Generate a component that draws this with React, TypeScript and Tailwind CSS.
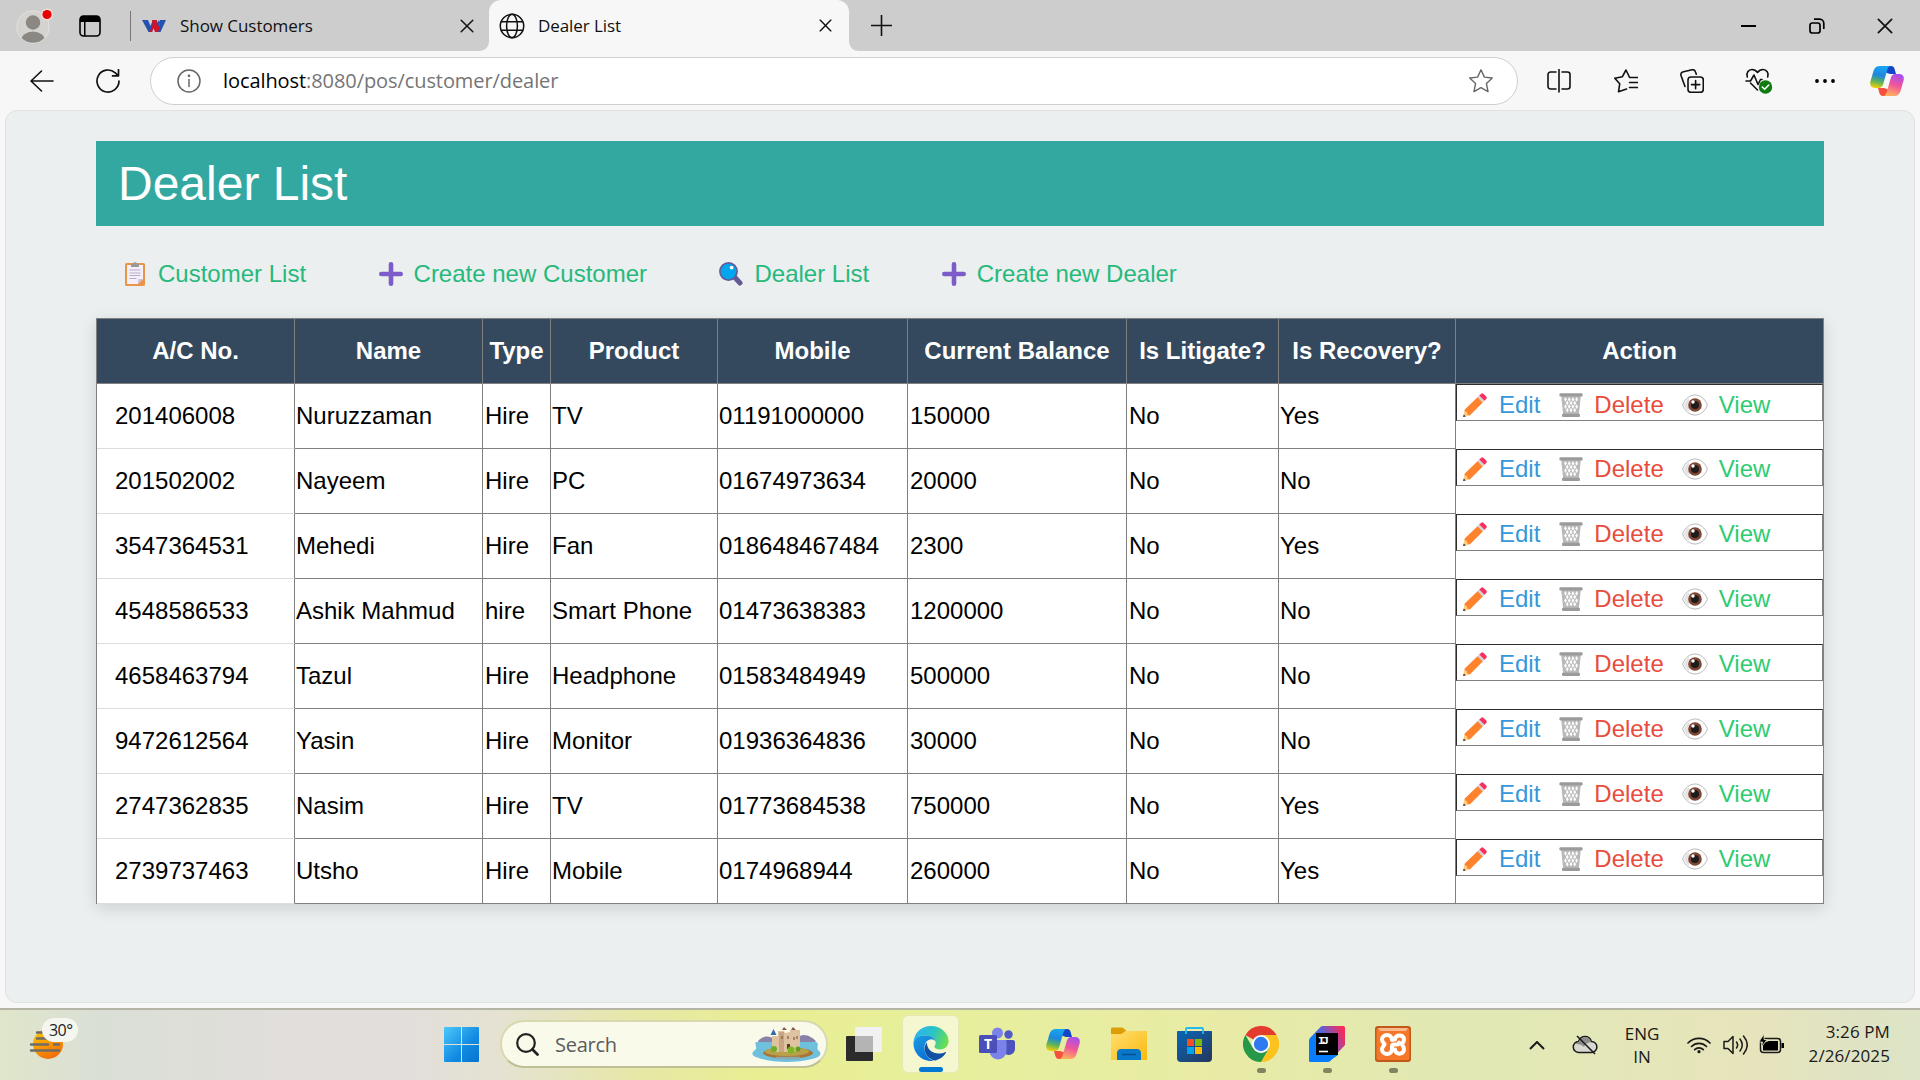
import type { ReactNode } from "react";

const UI = "font-['Open_Sans','Noto_Sans',sans-serif]";

const rows = [
  ["201406008", "Nuruzzaman", "Hire", "TV", "01191000000", "150000", "No", "Yes"],
  ["201502002", "Nayeem", "Hire", "PC", "01674973634", "20000", "No", "No"],
  ["3547364531", "Mehedi", "Hire", "Fan", "018648467484", "2300", "No", "Yes"],
  ["4548586533", "Ashik Mahmud", "hire", "Smart Phone", "01473638383", "1200000", "No", "No"],
  ["4658463794", "Tazul", "Hire", "Headphone", "01583484949", "500000", "No", "No"],
  ["9472612564", "Yasin", "Hire", "Monitor", "01936364836", "30000", "No", "No"],
  ["2747362835", "Nasim", "Hire", "TV", "01773684538", "750000", "No", "Yes"],
  ["2739737463", "Utsho", "Hire", "Mobile", "0174968944", "260000", "No", "Yes"],
];

const headers = ["A/C No.", "Name", "Type", "Product", "Mobile", "Current Balance", "Is Litigate?", "Is Recovery?", "Action"];

const COLS = "grid grid-cols-[198px_188px_68px_167px_190px_219px_152px_177px_368px]";

const cellPadding = ["pl-[18px]", "pl-px", "pl-[2px]", "pl-px", "pl-px", "pl-[2px]", "pl-[2px]", "pl-px"];

/* ---------- page emoji ---------- */

function Clipboard() {
  return (
    <svg width="24" height="24" viewBox="0 0 24 24" className="shrink-0">
      <rect x="2" y="1" width="20" height="23" rx="1.5" fill="#e8954a" />
      <path d="M4 3h16v14l-5 5H4z" fill="#f4effa" />
      <path d="M15 22l5-5v5z" fill="#e8954a" />
      <path d="M15 22v-5h5z" fill="#cfc3de" />
      <path d="M8 2h2c0-2.400 4-2.400 4 0h2v3H8z" fill="#9a9a9a" />
      <path d="M6.500 8h11M6.500 11h11M6.500 13.500h11M6.500 16.500h7" stroke="#b7aec4" strokeWidth="1.200" />
    </svg>
  );
}

function Plus() {
  return (
    <svg width="24" height="24" viewBox="0 0 24 24" className="shrink-0">
      <path d="M12 2.300v19.400M2.300 12h19.400" stroke="#7b5cc9" strokeWidth="4.600" strokeLinecap="round" />
    </svg>
  );
}

function Magnifier() {
  return (
    <svg width="24" height="24" viewBox="0 0 24 24" className="shrink-0">
      <path d="M15.500 15l5.500 6" stroke="#635994" strokeWidth="5" strokeLinecap="round" />
      <circle cx="9.500" cy="9.500" r="8.600" fill="#00a6ed" stroke="#635994" strokeWidth="1.600" />
      <circle cx="12.600" cy="5.600" r="1.900" fill="#fff" />
    </svg>
  );
}

function Pencil() {
  return (
    <svg width="24" height="24" viewBox="0 0 24 24" className="shrink-0">
      <path d="M1.500 17L6.500 22.500 0.300 24z" fill="#ffce7c" />
      <path d="M1.500 16.800L14.800 4l5.200 5.200L6.800 22.400 4.500 21.500 3.600 19 2 18.500z" fill="#ff822d" />
      <path d="M14.500 4.300l1.900-1.900 5.200 5.200-1.900 1.900z" fill="#d3d3d3" />
      <path d="M16.200 2.600L18 .9c.8-.8 1.800-.8 2.600 0l2.600 2.600c.8.8.8 1.800 0 2.500l-1.700 1.700z" fill="#f8305f" />
      <path d="M.8 21.400l2 2L0 24z" fill="#402a32" />
    </svg>
  );
}

function Trash() {
  return (
    <svg width="24" height="24" viewBox="0 0 24 24" className="shrink-0">
      <path d="M2.200 3h19.600l-2 19H4.200z" fill="#b9b9b9" />
      <g fill="#fff">
        <path d="M6.500 4l1.400 2.400-1.400 2.400-1.400-2.400zM10.200 4l1.400 2.400-1.400 2.400-1.400-2.400zM13.900 4l1.400 2.400-1.400 2.400-1.400-2.400zM17.600 4L19 6.400l-1.400 2.400-1.400-2.400z" />
        <path d="M8.300 7.600l1.400 2.400-1.400 2.400L6.900 10zM12 7.600l1.400 2.400-1.400 2.400-1.400-2.400zM15.700 7.600l1.400 2.400-1.400 2.400-1.400-2.400z" />
        <path d="M6.500 11.200l1.400 2.400L6.500 16l-1.400-2.400zM10.200 11.200l1.400 2.400-1.400 2.400-1.400-2.400zM13.900 11.200l1.400 2.400-1.400 2.400-1.400-2.400zM17.600 11.200l1.400 2.400-1.400 2.400-1.400-2.400z" />
        <path d="M8.300 14.800l1.400 2.400-1.400 2.400-1.400-2.400zM12 14.800l1.400 2.400-1.400 2.400-1.400-2.400zM15.700 14.800l1.400 2.400-1.400 2.400-1.400-2.400z" />
      </g>
      <rect x=".4" y=".3" width="23.200" height="3.200" rx="1.200" fill="#9b9b9b" />
      <rect x="3" y="20.800" width="18" height="3.200" rx="1.200" fill="#9b9b9b" />
    </svg>
  );
}

function Eye() {
  return (
    <svg width="26" height="24" viewBox="0 0 26 24" className="shrink-0">
      <path d="M.6 12C3 5.600 7.800 2 13 2s10 3.600 12.400 10C23 18.400 18.200 22 13 22S3 18.400.6 12z" fill="#fff" stroke="#b0b0b0" strokeWidth=".9" />
      <path d="M2 12c1-3 3-5.600 5-7v14c-2-1.500-4-4-5-7z" fill="#e4e4e4" />
      <circle cx="13" cy="12" r="6.800" fill="#7d4533" />
      <circle cx="13" cy="12" r="4" fill="#1c1c1c" />
      <circle cx="11" cy="9" r="1.700" fill="#fff" />
    </svg>
  );
}

/* ---------- browser chrome ---------- */

function Stroke({ size = 24, w = 1.5, color = "#111", children }: { size?: number; w?: number; color?: string; children: ReactNode }) {
  return (
    <svg width={size} height={size} viewBox="0 0 24 24" fill="none" stroke={color} strokeWidth={w} strokeLinecap="round" strokeLinejoin="round" className="shrink-0">
      {children}
    </svg>
  );
}

function Copilot({ size = 34, id }: { size?: number; id: string }) {
  return (
    <svg width={size} height={(size * 30) / 34} viewBox="0 0 34 30" className="shrink-0">
      <defs>
        <linearGradient id={id + "a"} x1="0.400" y1="0" x2="0.200" y2="1">
          <stop offset="0" stopColor="#18a5f2" />
          <stop offset=".4" stopColor="#1f86dd" />
          <stop offset=".7" stopColor="#5fb556" />
          <stop offset="1" stopColor="#ffd000" />
        </linearGradient>
        <linearGradient id={id + "b"} x1="0.700" y1="0" x2="0.400" y2="1">
          <stop offset="0" stopColor="#a64ef0" />
          <stop offset=".5" stopColor="#f0569a" />
          <stop offset="1" stopColor="#ffb05c" />
        </linearGradient>
      </defs>
      <path d="M17 0h4c2 0 3 1 3.600 3L26 8h-6l-6-2z" fill="#1345c8" />
      <path d="M17 30h-4c-2 0-3-1-3.600-3L8 22h6l6 2z" fill="#f4503c" />
      <path d="M10 0h11c-2 0-3 1.500-3.600 3.400L13.500 17c-1 3.500-2 5-5 5H5C1 22-.5 19.500.4 15.500L3.500 5C4.500 1.500 6.500 0 10 0z" fill={`url(#${id}a)`} />
      <path d="M24 30H13c2 0 3-1.500 3.600-3.400L20.500 13c1-3.500 2-5 5-5H29c4 0 5.500 2.500 4.600 6.500L30.500 25c-1 3.500-3 5-6.500 5z" fill={`url(#${id}b)`} />
    </svg>
  );
}

function Close({ size = 14 }: { size?: number }) {
  return (
    <svg width={size} height={size} viewBox="0 0 14 14" className="shrink-0">
      <path d="M1.200 1.200l11.600 11.600M12.800 1.200L1.200 12.800" stroke="#111" strokeWidth="1.500" strokeLinecap="round" />
    </svg>
  );
}

function TabStrip() {
  return (
    <div className="flex h-[51px] shrink-0 items-center bg-[#cdcdcd]">
      <svg width="40" height="40" viewBox="0 0 40 40" className="ml-[15px] shrink-0">
        <defs>
          <clipPath id="av"><circle cx="18" cy="21" r="15.800" /></clipPath>
        </defs>
        <circle cx="18" cy="21" r="16.300" fill="#d5d3d0" stroke="#e4e2df" strokeWidth="1" />
        <g clipPath="url(#av)" fill="#8b8783">
          <circle cx="18" cy="16.500" r="7.200" />
          <ellipse cx="18" cy="35" rx="12" ry="9.500" />
        </g>
        <circle cx="32" cy="8.500" r="6" fill="#f4dcdc" />
        <circle cx="32" cy="8.500" r="4.600" fill="#e60000" />
      </svg>
      <svg width="22" height="22" viewBox="0 0 22 22" className="ml-6 shrink-0">
        <rect x="1" y="1" width="20" height="20" rx="3.500" fill="none" stroke="#000" strokeWidth="1.600" />
        <path d="M1 7V4a3 3 0 013-3h14a3 3 0 013 3v3zM5 7h1.500v14H5z" fill="#000" />
      </svg>
      <div className="ml-[29px] h-[30px] w-px bg-[#777]" />
      <svg width="24" height="14" viewBox="0 0 24 14" className="ml-[11px] shrink-0">
        <path d="M0 1h6l2.500 6L11 1h4l-5 12H6.500z" fill="#2450b0" />
        <path d="M18 1h6l-5.500 12H15l2-6z" fill="#2450b0" />
        <path d="M10 1h4.500l1.500 4 2 3-2 5h-3l-1.500-4-1.500 4H7.500l3-7z" fill="#d0142a" />
        <path d="M14.500 5L17 1l1 3-1.500 3z" fill="#2450b0" />
      </svg>
      <span className={UI + " ml-[14px] w-[280px] whitespace-nowrap text-[17px] tracking-[-0.05px] text-[#111]"}>Show Customers</span>
      <Close />
      <svg width="10" height="10" viewBox="0 0 10 10" className="ml-[5px] shrink-0 self-end">
        <path d="M10 0v10H0C6 10 10 6 10 0z" fill="#f7f7f7" />
      </svg>
      <div className="flex h-full w-[360px] shrink-0 items-center rounded-t-[12px] bg-[#f7f7f7] pl-[10px]">
        <Stroke size={26} w={1.400}>
          <circle cx="12" cy="12" r="10.800" />
          <ellipse cx="12" cy="12" rx="5" ry="10.800" />
          <path d="M2 8h20M2 16h20" />
        </Stroke>
        <span className={UI + " ml-[13px] w-[281px] whitespace-nowrap text-[17px] tracking-[-0.08px] text-[#111]"}>Dealer List</span>
        <Close size={13} />
      </div>
      <svg width="10" height="10" viewBox="0 0 10 10" className="shrink-0 self-end">
        <path d="M0 0v10h10C4 10 0 6 0 0z" fill="#f7f7f7" />
      </svg>
      <svg width="21" height="21" viewBox="0 0 21 21" className="-mt-px ml-[12px] shrink-0">
        <path d="M10.500 0v21M0 10.500h21" stroke="#111" strokeWidth="1.600" />
      </svg>
      <div className="ml-auto flex items-center pr-[27px]">
        <div className="h-[2px] w-[15px] bg-black" />
        <svg width="16" height="16" viewBox="0 0 16 16" fill="none" stroke="#000" strokeWidth="1.700" className="ml-[53px]">
          <rect x="1" y="5" width="10" height="10" rx="2.300" />
          <path d="M5 1.200h5.500A4.300 4.300 0 0114.800 5.500V11" />
        </svg>
        <div className="ml-[52px]"><Close size={16} /></div>
      </div>
    </div>
  );
}

function Toolbar() {
  const cell = "flex w-[66.5px] shrink-0 items-center justify-center";
  return (
    <div className="flex h-[59px] shrink-0 items-center bg-[#f7f7f7] pt-px">
      <div className="ml-[30px] flex shrink-0">
        <svg width="24" height="22" viewBox="0 0 24 22" fill="none" stroke="#111" strokeWidth="1.600" strokeLinecap="round" strokeLinejoin="round">
          <path d="M23 11H1M11.500 1L1 11l10.500 10" />
        </svg>
      </div>
      <div className="ml-[42px]">
        <Stroke w={1.700}>
          <path d="M23 12a11 11 0 11-3.700-8.200L22 6.500M22.500 .8v6h-6" />
        </Stroke>
      </div>
      <div className="ml-[30px] flex h-[48px] w-[1368px] shrink-0 items-center rounded-full border border-[#cfcfcf] bg-white">
        <div className="ml-[26px]">
          <Stroke w={1.500} color="#666">
            <circle cx="12" cy="12" r="11" />
            <path d="M12 10.500v7" />
            <circle cx="12" cy="6.800" r=".6" fill="#666" />
          </Stroke>
        </div>
        <span className={UI + " ml-[22px] whitespace-nowrap text-[20px] tracking-[-0.08px] text-[#757575]"}>
          <span className="text-black">localhost</span>:8080/pos/customer/dealer
        </span>
        <div className="ml-auto mr-[24px]">
          <Stroke w={1.400} color="#666">
            <path d="M12 .8l3.400 7.300 7.900.9-5.900 5.400 1.600 8.200-7-4-7 4 1.600-8.200L.7 9l7.900-.9z" />
          </Stroke>
        </div>
      </div>
      <div className="ml-2 flex">
        <div className={cell}>
          <Stroke w={1.600}>
            <path d="M9 3H3.500a2.500 2.500 0 00-2.500 2.500v12A2.500 2.500 0 003.500 20H9M15 3h5.500A2.500 2.500 0 0123 5.500v12a2.500 2.500 0 01-2.500 2.500H15M12 .5v22.500" />
          </Stroke>
        </div>
        <div className={cell}>
          <Stroke w={1.600}>
            <path d="M12.500 20L4.500 22.800l1.200-8L.8 9.200l7.600-1.500L12 1l3.600 7.500M15.600 8.500h7.900M15.500 13.500h8M15.500 18.500h8" />
          </Stroke>
        </div>
        <div className={cell}>
          <Stroke w={1.600}>
            <rect x="8" y="8" width="15.300" height="15.300" rx="3" />
            <path d="M15.600 11.500v8.300M11.500 15.600h8.300M5 17.500L1 6.500A3 3 0 012.600 3L12 .8a3 3 0 013.500 2.200l.8 2.200" />
          </Stroke>
        </div>
        <div className={cell}>
          <svg width="28" height="26" viewBox="0 0 28 26" fill="none" stroke="#111" strokeWidth="1.600" strokeLinecap="round" strokeLinejoin="round">
            <path d="M2.300 9C.8 5 3.500 1.500 7 1.500c2.500 0 4 1 5.500 3 1.500-2 3-3 5.500-3 3.500 0 6.200 3.500 4.700 7.500M5.500 15l7 7M1 13h4.500L9 7l4 9.500 2.500-5H17" />
            <circle cx="20.500" cy="19" r="6.700" fill="#0f7b10" stroke="none" />
            <path d="M17.300 19l2.300 2.300 4.200-4.300" stroke="#fff" />
          </svg>
        </div>
        <div className={cell}>
          <svg width="20" height="4" viewBox="0 0 20 4"><circle cx="2" cy="2" r="1.900" /><circle cx="10" cy="2" r="1.900" /><circle cx="18" cy="2" r="1.900" /></svg>
        </div>
        <div className="flex w-[57px] items-center justify-center"><Copilot id="tc" /></div>
      </div>
    </div>
  );
}

/* ---------- page ---------- */

function NavLink({ icon, children }: { icon: ReactNode; children: ReactNode }) {
  return (
    <div className="flex items-center gap-[11px] whitespace-nowrap">
      {icon}
      <span>{children}</span>
    </div>
  );
}

function Actions({ first }: { first: boolean }) {
  return (
    <div className={"flex h-[37px] w-[367px] items-center border border-t-[#2c2c2c] border-r-[#808080] border-b-[#808080] border-l-[#2c2c2c] pl-[6px] " + (first ? "pt-[4px]" : "pt-[2px]")}>
      <Pencil />
      <span className="ml-[12px] text-[#3498db]">Edit</span>
      <span className="ml-[19px]"><Trash /></span>
      <span className="ml-[11px] text-[#e74c3c]">Delete</span>
      <span className="ml-[18px]"><Eye /></span>
      <span className="ml-[11px] text-[#2ecc71]">View</span>
    </div>
  );
}

function Page() {
  return (
    <div className="mx-[5px] flex h-[893px] shrink-0 flex-col rounded-[12px] border border-[#e0e2e2] bg-[#ebeff0] pl-[90px] pt-[30px] font-['Liberation_Sans',Arial,sans-serif] text-[24px] leading-[27px]">
      <div className="flex h-[85px] w-[1728px] items-center bg-[#33a8a0] pl-[22px] text-[48px] leading-[54px] text-white">Dealer List</div>
      <div className="mt-[34px] flex h-[27px] items-center gap-[72.5px] pl-[27px] text-[#27b97c]">
        <NavLink icon={<Clipboard />}>Customer List</NavLink>
        <NavLink icon={<Plus />}>Create new Customer</NavLink>
        <NavLink icon={<Magnifier />}>Dealer List</NavLink>
        <NavLink icon={<Plus />}>Create new Dealer</NavLink>
      </div>
      <div className="mt-[31px] w-[1728px] border-l border-t border-[#808080] bg-white shadow-[0_4px_15px_rgba(0,0,0,0.13)]">
        <div className={COLS + " h-[65px] bg-[#34495e] font-bold text-white"}>
          {headers.map((h) => (
            <div key={h} className="flex items-center justify-center whitespace-nowrap border-b border-r border-[#808080] pb-[2px]">{h}</div>
          ))}
        </div>
        {rows.map((r, i) => (
          <div key={r[0]} className={COLS + " h-[65px] text-black"}>
            {r.map((c, j) => (
              <div
                key={j}
                className={
                  "flex items-center whitespace-nowrap border-b border-r border-r-[#808080] pb-[2px] " +
                  cellPadding[j] +
                  (j === 0 ? " border-b-[#dddddd]" : " border-b-[#808080]")
                }
              >
                {c}
              </div>
            ))}
            <div className={"border-r border-r-[#808080] " + (i === rows.length - 1 ? "border-b border-b-[#808080]" : "")}>
              <Actions first={i === 0} />
            </div>
          </div>
        ))}
      </div>
    </div>
  );
}

/* ---------- taskbar ---------- */

function Castle() {
  return (
    <svg width="70" height="36" viewBox="0 0 70 36" className="shrink-0">
      <path d="M6 14c6-6 12-5 16-2l26-3c5-3 12 1 16 5l-4 4H8z" fill="#8a83a8" />
      <path d="M4 15h60c4 2 0 5 2 8 5 4 2 7-6 9-15 4-36 4-50 0-8-2-13-4-7-9 3-2-1-6 1-8z" fill="#6fc0dc" />
      <ellipse cx="36" cy="26" rx="25" ry="5.500" fill="#a97435" />
      <ellipse cx="35" cy="24.500" rx="22" ry="4.500" fill="#b9a14a" />
      <path d="M20 9h6V4h6l1 2 5-1V3h10v20l-8 2H22l-2-2z" fill="#dfc3a0" />
      <path d="M27 5h5v20h-5z" fill="#c7a681" />
      <path d="M18.500 8l3-6 3 6z" fill="#2b6fb3" />
      <path d="M30 3l2-3 3 3zM39 3l2-3 3 3z" fill="#86534a" />
      <path d="M35 17h3v5h-3z" fill="#5d3a2b" />
      <path d="M30 9v3M36 9v3M42 10v3M45 9v3" stroke="#7c5b46" strokeWidth="1.200" />
      <circle cx="22" cy="22" r="3" fill="#6fae24" />
      <circle cx="39" cy="23" r="3.500" fill="#79b81f" />
      <circle cx="46" cy="22" r="2.500" fill="#5f9c1d" />
      <path d="M24 31h24" stroke="#8fa8ad" strokeWidth="2.500" />
    </svg>
  );
}

function EdgeLogo() {
  return (
    <svg width="36" height="36" viewBox="0 0 36 36">
      <defs>
        <linearGradient id="e1" x1="0" y1="0.300" x2="1" y2="0.600">
          <stop offset="0" stopColor="#2db4ee" /><stop offset=".5" stopColor="#29c3c8" /><stop offset="1" stopColor="#6be04a" />
        </linearGradient>
        <linearGradient id="e2" x1="0" y1="0" x2="0.500" y2="1">
          <stop offset="0" stopColor="#1b9de2" /><stop offset="1" stopColor="#0a6fd6" />
        </linearGradient>
      </defs>
      <path d="M0 17C.5 7 8 0 18 0c10.500 0 18 7.500 18 15.500 0 5-3.500 8.500-8.500 8.500-4 0-6-1.500-6-2.800 0-1 1.300-1.500 1.300-4C22.800 13 18 9.600 12 9.600 6 9.600 1.500 12.500 0 17z" fill="url(#e1)" />
      <path d="M0 18C.7 12.500 6 9.600 12 9.600c6 0 10.800 3.400 10.800 7.600 0-2-2-3.500-4.500-3.500-4 0-7 4-7 9 0 6 4 11 9.500 13C10 37.500 0 29 0 18z" fill="url(#e2)" />
      <path d="M13.800 17c-2.800 3-3 8-.8 12 2 3.500 5.500 6.300 9.500 6.300 4.500-1 8.500-4 10.700-7.600.5-.8-.3-1.300-1-.9-2 1-4 1.500-6.200 1.500C19 28.300 13.800 24 13.800 17z" fill="#1150a4" />
    </svg>
  );
}

function TeamsLogo() {
  return (
    <svg width="36" height="34" viewBox="0 0 36 34">
      <circle cx="29.500" cy="7.500" r="4.200" fill="#5059c9" />
      <path d="M24 13h10c1 0 2 1 2 2v7a6.500 6.500 0 01-12 3z" fill="#4b53bc" />
      <circle cx="18.500" cy="6" r="5.500" fill="#7b83eb" />
      <path d="M11 13h15c1 0 1.500.7 1.500 1.500V24a8.500 8.500 0 01-17 0z" fill="#7b83eb" />
      <rect x="0" y="8" width="18" height="18" rx="1.500" fill="#4a4fba" />
      <text x="9" y="22" textAnchor="middle" fontSize="14" fontWeight="700" fill="#fff" fontFamily="Open Sans">T</text>
    </svg>
  );
}

function FolderLogo() {
  return (
    <svg width="36" height="34" viewBox="0 0 36 34">
      <defs><linearGradient id="fl" x1="0" y1="0" x2="1" y2="1"><stop offset="0" stopColor="#ffdf72" /><stop offset="1" stopColor="#fbb90d" /></linearGradient></defs>
      <path d="M0 2c0-1 .5-1.500 1.500-1.500h9c1 0 1.500.3 2.200 1L15.500 4H36v5H0z" fill="#dd9d05" />
      <path d="M0 7h10c2 0 3-3 5-3h20c.7 0 1 .4 1 1v28H0z" fill="url(#fl)" />
      <path d="M6 33V26c0-2 1.500-4 4-4h16c2.500 0 4 2 4 4v7z" fill="#0a78c8" />
      <path d="M11 27.500h14" stroke="#07508f" strokeWidth="1.500" />
    </svg>
  );
}

function StoreLogo() {
  return (
    <svg width="36" height="36" viewBox="0 0 36 36">
      <defs><linearGradient id="st" x1="0" y1="0" x2="1" y2="1"><stop offset="0" stopColor="#0867b8" /><stop offset="1" stopColor="#27365c" /></linearGradient></defs>
      <path d="M0 6c0-.6.400-1 1-1h33c.6 0 1 .4 1 1v26a4 4 0 01-4 4H4a4 4 0 01-4-4z" fill="url(#st)" />
      <path d="M9 8V3c0-.7.500-1 1-1h15c.7 0 1 .3 1 1v5" fill="none" stroke="#25b9f0" strokeWidth="1.800" />
      <path d="M10 13h7v7h-7z" fill="#f25022" /><path d="M18 13h7v7h-7z" fill="#7fba00" />
      <path d="M10 21h7v7h-7z" fill="#00a4ef" /><path d="M18 21h7v7h-7z" fill="#ffb900" />
    </svg>
  );
}

function ChromeLogo() {
  return (
    <svg width="36" height="36" viewBox="0 0 36 36">
      <path d="M18 18L2.400 9A18 18 0 0133.600 9z" fill="#e33b2e" />
      <path d="M18 9h15.600A18 18 0 0118 36l7.800-13.500z" fill="#fcc31e" />
      <path d="M2.400 9A18 18 0 0018 36l7.800-13.500L18 18l-7.800 4.500z" fill="#279847" />
      <circle cx="18" cy="18" r="9" fill="#fff" />
      <circle cx="18" cy="18" r="7.200" fill="#2f7af0" />
    </svg>
  );
}

function IntelliJLogo() {
  return (
    <svg width="36" height="36" viewBox="0 0 36 36">
      <defs>
        <linearGradient id="ij" x1="0" y1="0.600" x2="1" y2="0.200">
          <stop offset="0" stopColor="#087cfa" /><stop offset=".45" stopColor="#5a63d8" /><stop offset="1" stopColor="#fe2857" />
        </linearGradient>
      </defs>
      <path d="M14 0h20c1.300 0 2 .7 2 2v17L22 34c-1 1.300-2 2-4 2H2c-1.300 0-2-.7-2-2V15c0-1.500.5-2.500 1.500-3.500L11 1.500C12 .5 12.800 0 14 0z" fill="url(#ij)" />
      <path d="M0 15l7-8v22h22l-7 5c-1 1.300-2 2-4 2H2c-1.300 0-2-.7-2-2z" fill="#087cfa" />
      <path d="M7 7h22v22H7z" />
      <text x="9" y="18" fontSize="11.500" fontWeight="700" fill="#fff" fontFamily="Liberation Mono" textLength="11">IJ</text>
      <path d="M10 25.500h9" stroke="#fff" strokeWidth="1.600" />
    </svg>
  );
}

function XamppLogo() {
  return (
    <svg width="36" height="36" viewBox="0 0 36 36">
      <rect width="36" height="36" rx="3" fill="#c05a18" />
      <rect x="1.500" y="2" width="33" height="32" rx="2" fill="#f5782a" />
      <path d="M3 2h30l-2 3H5z" fill="#f9b98d" />
      <path
        d="M17 14c0-7-10-6-10-.5 0 3 2.500 3.500 2.500 4.700S7 20.500 7 23.500c0 5.500 10 6.500 10-.5v-2.500c0-1.500.5-2 2-2h3c1.500 0 2-.5 2-2M20 13.500c0-5.500 9-5.500 9 0 0 3-2 3.500-2 4.700s2 2.300 2 5.300c0 5.500-9 5.500-9 0"
        fill="none"
        stroke="#fff"
        strokeWidth="4"
        strokeLinecap="round"
        strokeLinejoin="round"
      />
    </svg>
  );
}

function TaskIcon({ children, dot }: { children: ReactNode; dot?: boolean }) {
  return (
    <div className="flex h-[60px] w-[66px] shrink-0 flex-col items-center">
      <div className="mt-[12px] flex h-[36px] items-center">{children}</div>
      {dot && <div className="mt-[6px] h-[5px] w-[9px] rounded-full bg-[#808460]" />}
    </div>
  );
}

function Taskbar() {
  return (
    <div className={UI + " mt-[5px] flex h-[72px] shrink-0 border-t-2 border-[#b5b5a5] bg-[linear-gradient(90deg,#dfe6c9_0px,#dadfd6_100px,#e1dedb_280px,#e2dedb_400px,#e5e2d2_500px,#e6e8a6_640px,#e9ee92_760px,#e7ef9c_950px,#e8eba6_1240px,#e1e8b3_1440px,#e3e8b6_1550px,#e7e4bc_1750px,#dfe3c4_1860px,#dee4c6_1920px)]"}>
      <div className="ml-[29px] mt-[8px] h-[44px] w-[50px] shrink-0">
        <svg width="50" height="44" viewBox="0 0 50 44">
          <defs><linearGradient id="sun" x1="0.200" y1="0" x2="0.700" y2="1"><stop offset="0" stopColor="#fdc500" /><stop offset="1" stopColor="#f06a0a" /></linearGradient></defs>
          <circle cx="19" cy="26" r="15" fill="url(#sun)" />
          <path d="M8 20.500h27M8 14.500h8M2 26.500h17M25 26.500h5M2 32.500h28" stroke="#6f6c68" strokeWidth="2.400" strokeLinecap="round" />
          <rect x="13" y="0" width="36" height="24" rx="12" fill="#f6f6f0" />
          <text x="20" y="17.500" fontSize="16" textLength="24" fill="#222" fontFamily="Open Sans">30°</text>
        </svg>
      </div>
      <svg width="35" height="35" viewBox="0 0 35 35" className="ml-[365px] mt-[17px] shrink-0">
        <defs><linearGradient id="win" x1="0" y1="0" x2="1" y2="1"><stop offset="0" stopColor="#4cc8fb" /><stop offset=".6" stopColor="#118ae2" /><stop offset="1" stopColor="#0574d0" /></linearGradient></defs>
        <path d="M1 0h16v17H0V1a1 1 0 011-1zM18 0h16a1 1 0 011 1v16H18zM0 18h17v17H1a1 1 0 01-1-1zM18 18h17v16a1 1 0 01-1 1H18z" fill="url(#win)" />
      </svg>
      <div className="ml-[21px] mt-[10px] flex h-[48px] w-[328px] shrink-0 items-center rounded-full border-2 border-[#d8d9ae] border-b-[#bfc096] bg-[#f9faea]">
        <svg width="23" height="23" viewBox="0 0 23 23" className="ml-[14px] shrink-0" fill="none" stroke="#222" strokeLinecap="round">
          <circle cx="10" cy="10" r="8.800" strokeWidth="2.200" />
          <path d="M16.500 16.500l5 5" strokeWidth="2.800" />
        </svg>
        <span className="ml-[16px] pt-px text-[20px] tracking-[-0.25px] text-[#5c5c5c]">Search</span>
        <div className="ml-auto mr-[4px] pt-[2px]"><Castle /></div>
      </div>
      <svg width="36" height="35" viewBox="0 0 36 35" className="ml-[18px] mt-[17px] shrink-0">
        <rect x="0" y="9" width="27" height="25" rx="1" fill="#2b2b2b" />
        <rect x="9" y="0" width="27" height="25" rx="1" fill="#f1f1f1" />
        <path d="M9 9h18v16H9z" fill="#b4b4b4" />
      </svg>
      <div className="ml-[20px] mt-[5px] flex h-[58px] w-[57px] shrink-0 flex-col items-center rounded-[6px] border border-[#e6e8b4] bg-[#f4f7cf] pt-[10px]">
        <EdgeLogo />
        <div className="mt-[6px] h-[5px] w-[24px] rounded-full bg-[#0078d4]" />
      </div>
      <div className="mt-[4px] flex pl-[5px]">
        <TaskIcon><TeamsLogo /></TaskIcon>
        <TaskIcon><Copilot id="bc" /></TaskIcon>
        <TaskIcon><FolderLogo /></TaskIcon>
        <TaskIcon><StoreLogo /></TaskIcon>
        <TaskIcon dot><ChromeLogo /></TaskIcon>
        <TaskIcon dot><IntelliJLogo /></TaskIcon>
        <TaskIcon dot><XamppLogo /></TaskIcon>
      </div>
      <div className="ml-auto flex h-[70px] items-center pr-[30px] text-[#1a1a1a]">
        <svg width="16" height="9" viewBox="0 0 16 9" fill="none" stroke="#1a1a1a" strokeWidth="2"><path d="M1 8l7-7 7 7" /></svg>
        <svg width="26" height="20" viewBox="0 0 26 20" className="ml-[27px]">
          <path d="M7 17.500a5.500 5.500 0 01-.5-11C8 3 10.500 1.500 13 1.500c3.500 0 5.500 2 6.300 5a5.300 5.300 0 01.2 11z" fill="#d8d8d2" stroke="#1a1a1a" strokeWidth="1.500" />
          <path d="M6.500 7C8 3.500 10.500 2 13 2c3.500 0 5.500 2 6 5-4 1-6 2-7 5C10 10 8 9 3 9z" fill="#8c8c8c" />
          <path d="M5 1l18 18" stroke="#1a1a1a" strokeWidth="1.600" />
        </svg>
        <div className="ml-[25px] flex w-[38px] flex-col items-center pb-px text-[17px] leading-[23px]"><span>ENG</span><span>IN</span></div>
        <svg width="24" height="18" viewBox="0 0 24 18" className="ml-[26px]" fill="none" stroke="#1a1a1a" strokeWidth="1.700" strokeLinecap="round">
          <path d="M1 7a15.500 15.500 0 0122 0M4.500 10.500a10.600 10.600 0 0115 0M7.700 13.700a6 6 0 018.600 0" />
          <circle cx="12" cy="15.700" r="1.600" fill="#1a1a1a" stroke="none" />
        </svg>
        <svg width="25" height="22" viewBox="0 0 25 22" className="ml-[12px]" fill="none" stroke="#1a1a1a" strokeWidth="1.500" strokeLinecap="round" strokeLinejoin="round">
          <path d="M1 7.500h4l5-5v17l-5-5H1zM13.500 8c1.500 2 1.500 4 0 6M17 5c3 4 3 8 0 12M20.500 2c5 6 5 12 0 18" />
        </svg>
        <svg width="25" height="20" viewBox="0 0 25 20" className="ml-[11px] mb-[3px]">
          <rect x="1.500" y="4.500" width="20" height="14" rx="3" fill="none" stroke="#1a1a1a" strokeWidth="1.500" />
          <path d="M4 9l6-2h9v9.500H4z" />
          <path d="M22.500 9H25v5h-2.500z" />
          <path d="M5 0L0 8h3.500L2.500 13 8 5.500H5z" stroke="#e6e5bb" strokeWidth=".8" />
        </svg>
        <div className="ml-[16px] flex w-[90px] flex-col items-end whitespace-nowrap pb-[3px] text-[17px] leading-[24px] tracking-[0.1px]"><span>3:26 PM</span><span>2/26/2025</span></div>
      </div>
    </div>
  );
}

export default function App() {
  return (
    <div className="flex h-[1080px] w-[1920px] flex-col overflow-hidden bg-[#f7f7f7]">
      <TabStrip />
      <Toolbar />
      <Page />
      <Taskbar />
    </div>
  );
}
